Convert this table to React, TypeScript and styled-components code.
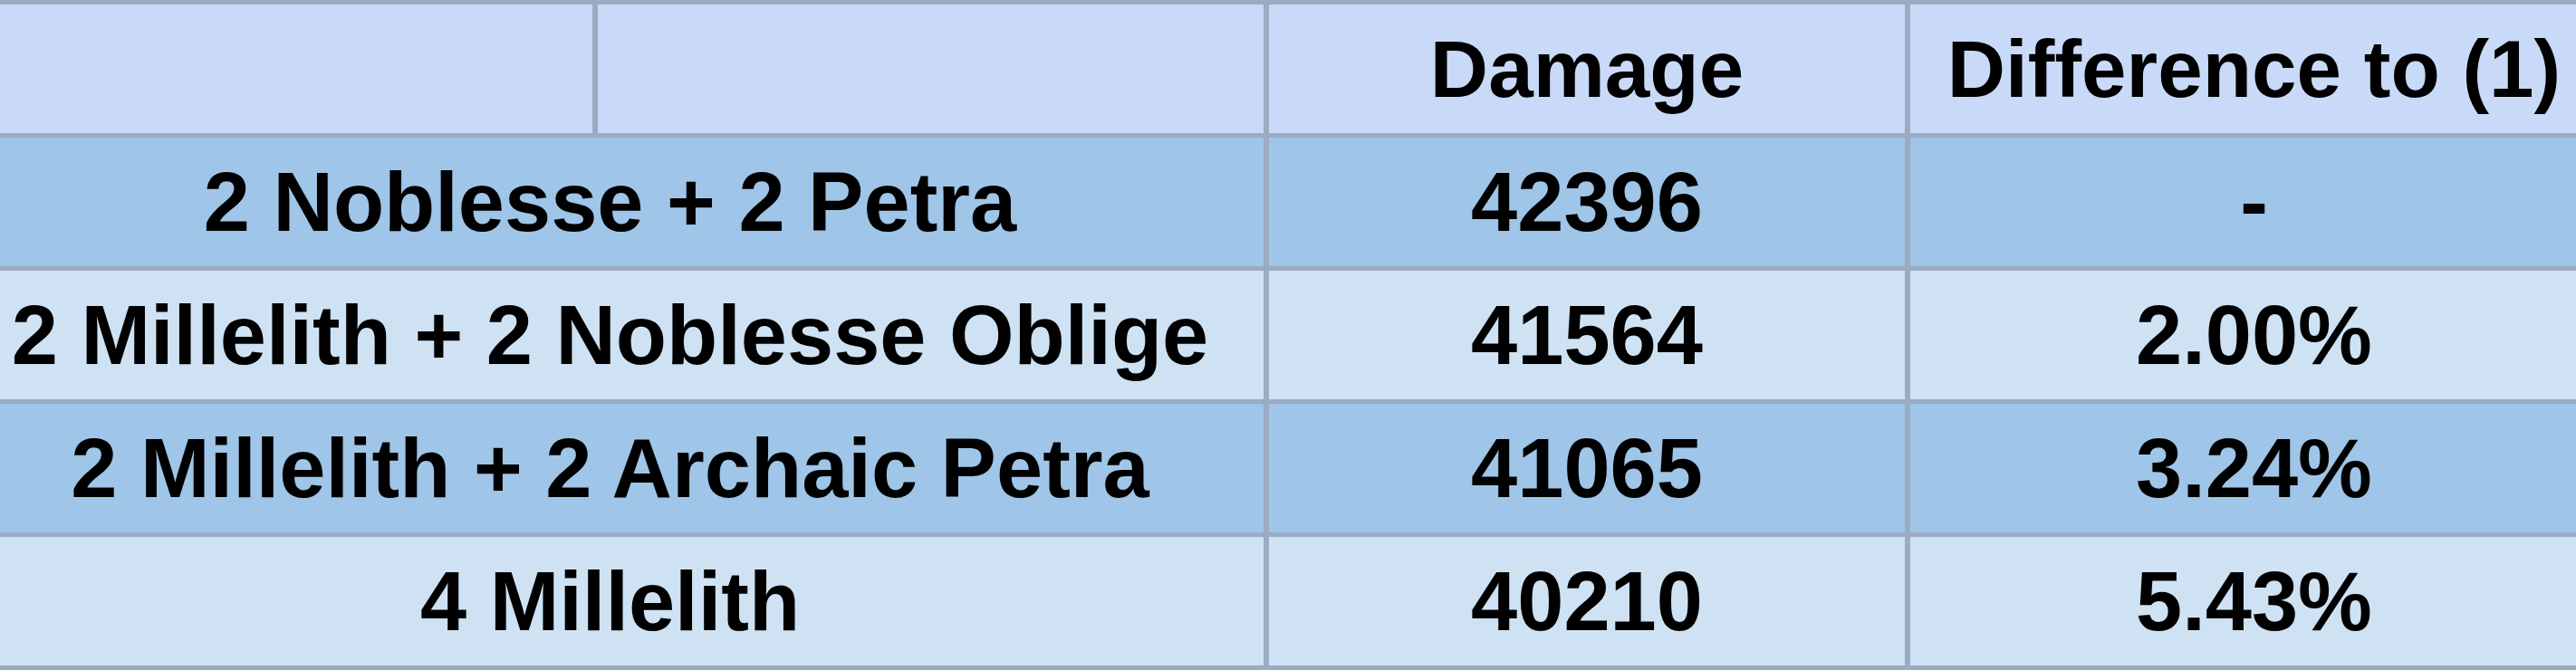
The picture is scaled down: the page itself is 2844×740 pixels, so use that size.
import React from "react";
import styled, { createGlobalStyle } from "styled-components";

const GlobalStyle = createGlobalStyle`
  html, body {
    margin: 0;
    padding: 0;
    overflow: hidden;
    background: #9aabc2;
  }
`;

type Row = {
  set: string;
  damage: string;
  diff: string;
};

const rows: Row[] = [
  { set: "2 Noblesse + 2 Petra", damage: "42396", diff: "-" },
  { set: "2 Millelith + 2 Noblesse Oblige", damage: "41564", diff: "2.00%" },
  { set: "2 Millelith + 2 Archaic Petra", damage: "41065", diff: "3.24%" },
  { set: "4 Millelith", damage: "40210", diff: "5.43%" },
];

// table runs past both window edges, like the cropped sheet in the shot
const Sheet = styled.div`
  display: grid;
  grid-template-columns: 702px 735px 702px 759px;
  grid-auto-rows: 142px;
  column-gap: 6px;
  row-gap: 5px;
  padding: 5px 0;
  margin-left: -48px;
  width: 2916px;
  background: #9aabc2;
  font-family: "Liberation Sans", Arial, sans-serif;
  font-weight: 700;
  color: #000;
`;

const Cell = styled.div<{ $tone: "head" | "dark" | "light"; $span?: number }>`
  display: flex;
  align-items: center;
  justify-content: center;
  white-space: nowrap;
  grid-column: span ${(p) => p.$span ?? 1};
  font-size: ${(p) => (p.$tone === "head" ? "89px" : "92px")};
  background: ${(p) =>
    p.$tone === "head" ? "#c9daf8" : p.$tone === "dark" ? "#9fc5e8" : "#cfe2f3"};
`;

const App: React.FC = () => {
  return (
    <>
      <GlobalStyle />
      <Sheet>
        <Cell $tone="head" />
        <Cell $tone="head" />
        <Cell $tone="head">Damage</Cell>
        <Cell $tone="head">Difference to (1)</Cell>
        {rows.map((r, i) => {
          const tone = i % 2 === 0 ? "dark" : "light";
          return (
            <React.Fragment key={r.set}>
              <Cell $tone={tone} $span={2}>
                {r.set}
              </Cell>
              <Cell $tone={tone}>{r.damage}</Cell>
              <Cell $tone={tone}>{r.diff}</Cell>
            </React.Fragment>
          );
        })}
      </Sheet>
    </>
  );
};

export default App;
